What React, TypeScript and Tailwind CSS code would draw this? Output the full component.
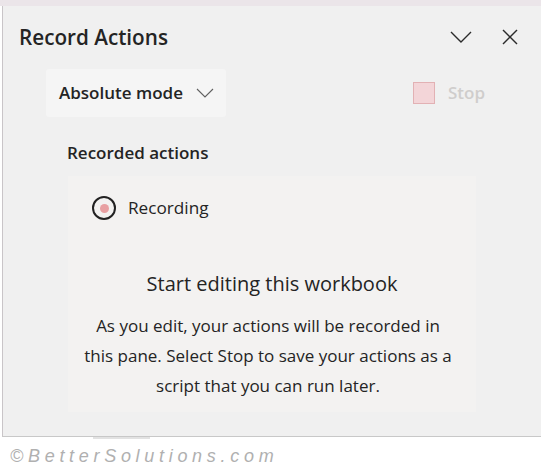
import React from "react";

export default function App() {
  const font = { fontFamily: '"Open Sans", "Noto Sans", sans-serif' };
  return (
    <div className="w-[541px] h-[474px] bg-white overflow-hidden" style={font}>
      <div className="h-[6px] bg-[#ebe5e9]" />
      <div className="ml-[2px] h-[431px] border-l border-b border-l-[#c9c5c8] border-b-[#c8c8c8] bg-[#f0f0f0] flex flex-col text-[#242424]">
        {/* header */}
        <div className="h-[62px] flex items-center pl-[16px] pr-[23px]">
          <div className="text-[20.7px] leading-[28px] font-semibold text-[#242424]">Record Actions</div>
          <div className="ml-auto flex items-center">
            <svg width="22" height="12" viewBox="0 0 22 12" className="mr-[30px]">
              <polyline points="1,1 11,11 21,1" fill="none" stroke="#2b2b2b" strokeWidth="1.4" />
            </svg>
            <svg width="16" height="16" viewBox="0 0 16 16">
              <line x1="1" y1="1" x2="15" y2="15" stroke="#2b2b2b" strokeWidth="1.4" />
              <line x1="15" y1="1" x2="1" y2="15" stroke="#2b2b2b" strokeWidth="1.4" />
            </svg>
          </div>
        </div>
        {/* mode row */}
        <div className="mt-[1px] h-[48px] flex items-center">
          <div className="ml-[43px] w-[180px] h-[48px] rounded-[3px] bg-[#f5f5f5] flex items-center pl-[13px]">
            <span className="text-[17px] leading-[24px] font-semibold">Absolute mode</span>
            <svg width="18" height="10" viewBox="0 0 18 10" className="ml-[13px]">
              <polyline points="1,1 9,9 17,1" fill="none" stroke="#606060" strokeWidth="1.1" />
            </svg>
          </div>
          <div className="ml-[187px] flex items-center">
            <div className="w-[22px] h-[22px] bg-[#f3d5d8] border border-[#e2b1b4]" />
            <span className="ml-[13px] text-[17px] leading-[24px] font-semibold text-[#cfcdcc]">Stop</span>
          </div>
        </div>
        {/* recorded actions label */}
        <div className="mt-[24px] h-[24px] flex items-center pl-[64px]">
          <span className="text-[17px] leading-[24px] font-semibold">Recorded actions</span>
        </div>
        {/* card */}
        <div className="mt-[11px] ml-[65px] w-[408px] h-[236px] bg-[#f3f2f1] flex flex-col">
          <div className="mt-[20px] h-[24px] flex items-center pl-[24px]">
            <div className="w-[24px] h-[24px] rounded-full border-2 border-[#222] flex items-center justify-center">
              <div className="w-[9px] h-[9px] rounded-full bg-[#e8a0a2]" />
            </div>
            <span className="ml-[12px] text-[17.2px] leading-[24px] font-medium">Recording</span>
          </div>
          <div className="mt-[50px] h-[28px] text-center text-[20px] leading-[28px] text-[#242424]">
            Start editing this workbook
          </div>
          <div className="mt-[13px] pr-[8px] text-center text-[17px] leading-[30px] text-[#242424] whitespace-nowrap">
            As you edit, your actions will be recorded in
            <br />
            this pane. Select Stop to save your actions as a
            <br />
            script that you can run later.
          </div>
        </div>
      </div>
      <div className="ml-[93px] w-[57px] h-[2px] bg-[#e2e2e2]" />
      <div
        className="mt-[7px] ml-[10px] text-[18px] leading-[20px] italic text-[#b0b0b0] tracking-[4.7px]"
        style={{ fontFamily: '"Liberation Sans", sans-serif' }}
      >
        ©BetterSolutions.com
      </div>
    </div>
  );
}
